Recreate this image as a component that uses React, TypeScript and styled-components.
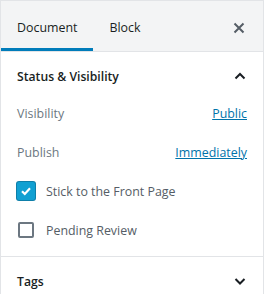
import React from "react";
import styled, { createGlobalStyle } from "styled-components";

const GlobalStyle = createGlobalStyle`
    body {
        margin: 0;
        background: #fff;
        font-family: "Open Sans", "Noto Sans", sans-serif;
        font-size: 12.4px;
        color: #191e23;
    }
`;

const Panel = styled.div`
    width: 264px;
    height: 294px;
    box-sizing: border-box;
    border-left: 1px solid #e2e4e7;
    border-right: 1px solid #e2e4e7;
    border-top: 1px solid #e2e4e7;
    overflow: hidden;
`;

const Header = styled.header`
    display: flex;
    align-items: stretch;
    height: 50px;
    background: #f3f4f5;
    border-bottom: 1px solid #e2e4e7;
`;

interface TabProps {
    active?: boolean;
}
const Tab = styled.button<TabProps>`
    display: flex;
    align-items: center;
    background: none;
    border: none;
    margin: 0;
    padding: 3px 16px 0 16px;
    font: inherit;
    color: #191e23;
    box-shadow: ${(p) => (p.active ? "inset 0 -3px 0 #007cba" : "none")};
    cursor: pointer;
`;

const CloseButton = styled.button`
    margin-left: auto;
    width: 48px;
    display: flex;
    align-items: center;
    justify-content: center;
    background: none;
    border: none;
    padding: 4px 0 0 0;
`;

const Section = styled.section`
    padding: 0 16px 13px;
    border-bottom: 1px solid #e2e4e7;
`;

const SectionTitle = styled.div`
    display: flex;
    align-items: center;
    justify-content: space-between;
    height: 48px;
    font-weight: 600;
    font-size: 12.2px;
    color: #191e23;
`;

const CollapsedTitle = styled(SectionTitle)`
    padding: 0 16px;
`;

const Row = styled.div`
    display: flex;
    align-items: center;
    justify-content: space-between;
    height: 26px;
    & + & {
        margin-top: 13px;
    }
`;

const Label = styled.span`
    color: #6c7781;
`;

const Link = styled.a`
    color: #0073aa;
    text-decoration: underline;
`;

const CheckRow = styled.label`
    display: flex;
    align-items: center;
    gap: 11px;
    color: #555d66;
`;

interface BoxProps {
    checked?: boolean;
}
const Box = styled.span<BoxProps>`
    box-sizing: border-box;
    width: ${(p) => (p.checked ? "18px" : "16px")};
    height: ${(p) => (p.checked ? "18px" : "16px")};
    margin: ${(p) => (p.checked ? "0" : "0 1px")};
    border-radius: 2px;
    border: ${(p) => (p.checked ? "none" : "2px solid #6c7781")};
    background: ${(p) => (p.checked ? "#11a0d2" : "#fff")};
    box-shadow: ${(p) => (p.checked ? "0 0 0 1px #0e7fa9" : "none")};
    display: flex;
    align-items: center;
    justify-content: center;
`;

const Chevron = ({ up }: { up?: boolean }) => (
    <svg width="14" height="14" viewBox="0 0 14 14">
        <path
            d={up ? "M2.5 9.5 L7 5 L11.5 9.5" : "M2.5 5 L7 9.5 L11.5 5"}
            fill="none"
            stroke="#191e23"
            strokeWidth="2"
        />
    </svg>
);

export default function App() {
    return (
        <>
            <GlobalStyle />
            <Panel>
                <Header>
                    <Tab active>Document</Tab>
                    <Tab>Block</Tab>
                    <CloseButton aria-label="Close">
                        <svg width="12" height="12" viewBox="0 0 12 12">
                            <path d="M1.5 1.5 L10.5 10.5 M10.5 1.5 L1.5 10.5" stroke="#555d66" strokeWidth="2" />
                        </svg>
                    </CloseButton>
                </Header>
                <Section>
                    <SectionTitle>
                        Status &amp; Visibility
                        <Chevron up />
                    </SectionTitle>
                    <Row>
                        <Label>Visibility</Label>
                        <Link href="#">Public</Link>
                    </Row>
                    <Row>
                        <Label>Publish</Label>
                        <Link href="#">Immediately</Link>
                    </Row>
                    <Row>
                        <CheckRow>
                            <Box checked>
                                <svg width="12" height="12" viewBox="0 0 12 12">
                                    <path d="M2 6.2 L4.8 9 L10 3.2" fill="none" stroke="#fff" strokeWidth="2.2" />
                                </svg>
                            </Box>
                            Stick to the Front Page
                        </CheckRow>
                    </Row>
                    <Row>
                        <CheckRow>
                            <Box />
                            Pending Review
                        </CheckRow>
                    </Row>
                </Section>
                <CollapsedTitle>
                    Tags
                    <Chevron />
                </CollapsedTitle>
            </Panel>
        </>
    );
}
